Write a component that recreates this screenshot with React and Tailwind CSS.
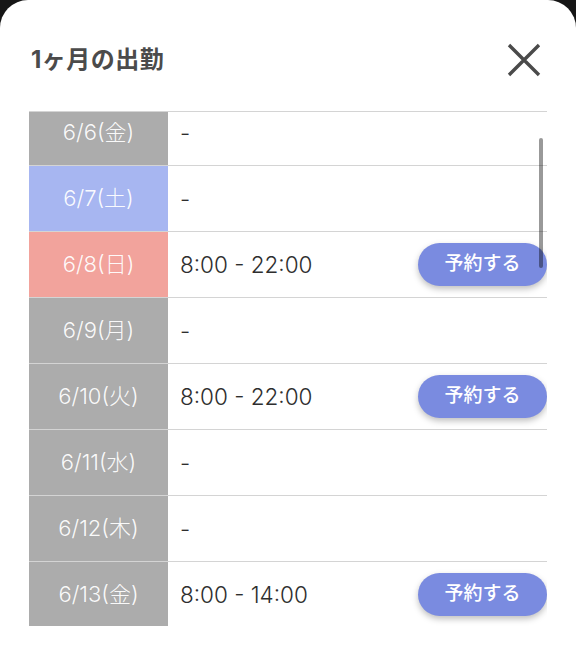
import React from "react";

const rows = [
  { date: "6/6(金)", time: "-", kind: "weekday" },
  { date: "6/7(土)", time: "-", kind: "sat" },
  { date: "6/8(日)", time: "8:00 - 22:00", kind: "sun", bookable: true },
  { date: "6/9(月)", time: "-", kind: "weekday" },
  { date: "6/10(火)", time: "8:00 - 22:00", kind: "weekday", bookable: true },
  { date: "6/11(水)", time: "-", kind: "weekday" },
  { date: "6/12(木)", time: "-", kind: "weekday" },
  { date: "6/13(金)", time: "8:00 - 14:00", kind: "weekday", bookable: true },
];

const dateBg = {
  weekday: "bg-[#acacac]",
  sat: "bg-[#a7b6f1]",
  sun: "bg-[#f2a39c]",
};

function CloseIcon() {
  return (
    <svg width="36" height="36" viewBox="0 0 36 36" fill="none">
      <path
        d="M3 3 L33 33 M33 3 L3 33"
        stroke="#4a4a4a"
        strokeWidth="3.4"
        strokeLinecap="butt"
      />
    </svg>
  );
}

export default function App() {
  return (
    <div
      className="min-h-screen bg-[#161616]"
      style={{ fontFamily: 'Inter, "Noto Sans CJK JP", sans-serif' }}
    >
      <div className="h-[656px] bg-white rounded-t-[28px] pt-[40px]">
        {/* header */}
        <div className="flex items-center justify-between h-[40px] pl-[31px] pr-[34px]">
          <h1 className="text-[24px] font-bold text-[#4b4b4b] tracking-[0.5px]">
            1ヶ月の出勤
          </h1>
          <button className="w-[36px] h-[36px] flex items-center justify-center">
            <CloseIcon />
          </button>
        </div>

        {/* list */}
        <div className="relative mx-[29px] mt-[31px] h-[515px] overflow-hidden border-t border-[#d4d4d4]">
          <div className="-mt-[12px]">
            {rows.map((r) => (
              <div key={r.date} className="flex h-[66px] border-b border-[#d4d4d4]">
                <div
                  className={`w-[139px] shrink-0 flex items-center justify-center text-[22px] font-light text-white/95 ${dateBg[r.kind]}`}
                >
                  {r.date}
                </div>
                <div className="flex-1 flex items-center justify-between pl-[12px]">
                  <span className="text-[22.5px] font-light text-[#2e2e2e]">{r.time}</span>
                  {r.bookable && (
                    <button className="w-[129px] h-[43px] rounded-full bg-[#7a8be0] text-white text-[19px] font-medium shadow-[0_3px_6px_rgba(0,0,0,0.25)]">
                      予約する
                    </button>
                  )}
                </div>
              </div>
            ))}
          </div>
          {/* scrollbar */}
          <div className="absolute right-[4px] top-[26px] w-[4px] h-[130px] rounded-full bg-black/40" />
        </div>
      </div>
    </div>
  );
}
